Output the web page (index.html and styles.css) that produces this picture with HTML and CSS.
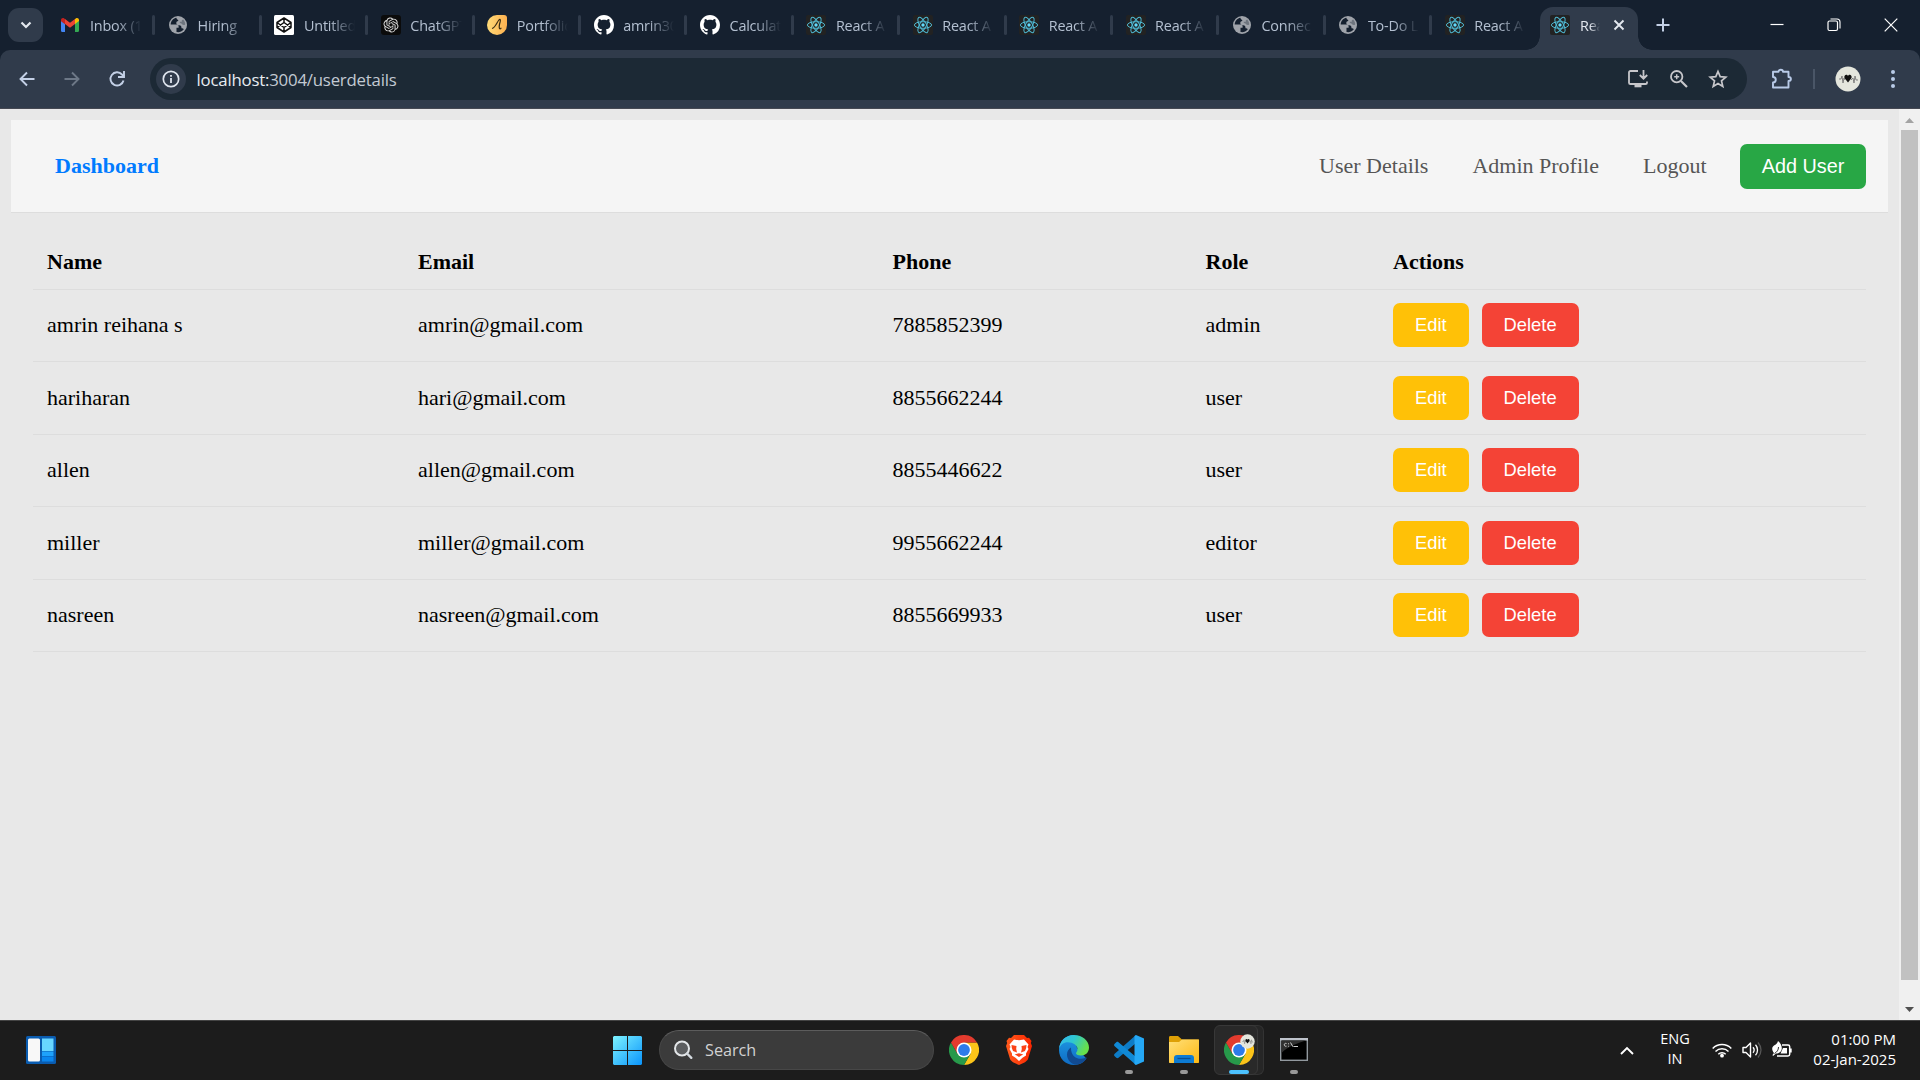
FILE: index.html
```html
<!DOCTYPE html>
<html lang="en">
<head>
<meta charset="utf-8">
<title>React App</title>
<link rel="stylesheet" href="styles.css">
</head>
<body>
<svg class="defs" aria-hidden="true">
  <defs>
    <linearGradient id="g-win" x1="0" y1="0" x2="1" y2="1"><stop offset="0" stop-color="#7df3ff"/><stop offset="1" stop-color="#0a94fb"/></linearGradient>
    <linearGradient id="g-edge" x1="0" y1="0" x2="1" y2="0.4"><stop offset="0" stop-color="#35b8f1"/><stop offset=".5" stop-color="#2fc7d0"/><stop offset="1" stop-color="#67e04c"/></linearGradient>
    <linearGradient id="g-edge2" x1="0" y1="0" x2="0" y2="1"><stop offset="0" stop-color="#1f9be6"/><stop offset="1" stop-color="#0f6bc2"/></linearGradient>
    <linearGradient id="g-folder" x1="0" y1="0" x2="1" y2="1"><stop offset="0" stop-color="#ffe07a"/><stop offset="1" stop-color="#fdb813"/></linearGradient>
    <linearGradient id="g-brave" x1="0" y1="0" x2="1" y2="0"><stop offset="0" stop-color="#ff5a1c"/><stop offset="1" stop-color="#fb2600"/></linearGradient>
    <linearGradient id="g-port" x1="0" y1="0" x2="1" y2="0"><stop offset="0" stop-color="#ffdb78"/><stop offset="1" stop-color="#fdb04f"/></linearGradient>
  </defs>
  <symbol id="react" viewBox="0 0 20 20">
    <rect width="20" height="20" rx="2" fill="#222"/>
    <g fill="none" stroke="#4fb9d3" stroke-width="1">
      <ellipse cx="10" cy="10" rx="8.6" ry="3.3"/>
      <ellipse cx="10" cy="10" rx="8.6" ry="3.3" transform="rotate(60 10 10)"/>
      <ellipse cx="10" cy="10" rx="8.6" ry="3.3" transform="rotate(120 10 10)"/>
    </g>
    <circle cx="10" cy="10" r="1.7" fill="#61dafb"/>
  </symbol>
  <symbol id="globe" viewBox="0 0 20 20">
    <circle cx="10" cy="10" r="9" fill="#9fa3aa"/>
    <path d="M8.300 2.800C5 3.500 2.800 6.300 2.700 9.500h5.600c1.500 0 2.300.9 2.300 2v1.300H8.500v4.300c2.500.5 5.500-.2 7.300-2.800-.5-.8-1.200-1-2.300-1 0-2.200-.6-3-2.200-3-1.800 0-3-.9-3-2.300 0-1.300.8-2.100 2-2.100 0-1-.4-1.500-1.200-1.500z" fill="#15202f"/>
    <path d="M17.200 9.500c-1.200.9-3.200.6-3.700-.9-1.300-.1-1.900-.8-1.900-1.800h2.200V5.300l1.400-.7c1.200 1.200 2 3 2 4.900z" fill="#15202f" opacity=".35"/>
  </symbol>
  <symbol id="github" viewBox="0 0 16 16">
    <path fill="#fff" d="M8 0C3.580 0 0 3.580 0 8c0 3.540 2.290 6.530 5.470 7.590.4.070.55-.17.55-.38 0-.19-.01-.82-.01-1.490-2.010.37-2.530-.49-2.690-.94-.09-.23-.48-.94-.82-1.130-.28-.15-.68-.52-.01-.53.63-.01 1.080.58 1.230.82.72 1.210 1.870.87 2.330.66.07-.52.28-.87.51-1.070-1.780-.2-3.640-.89-3.640-3.950 0-.87.31-1.590.82-2.150-.08-.2-.36-1.020.08-2.120 0 0 .67-.21 2.200.82.64-.18 1.320-.27 2-.27s1.360.09 2 .27c1.530-1.040 2.200-.82 2.200-.82.44 1.100.16 1.920.08 2.120.51.56.82 1.270.82 2.150 0 3.070-1.870 3.750-3.650 3.950.29.25.54.73.54 1.480 0 1.070-.01 1.930-.01 2.200 0 .21.15.46.55.38A8.010 8.010 0 0 0 16 8c0-4.420-3.580-8-8-8z"/>
  </symbol>
  <symbol id="chrome" viewBox="0 0 30 30">
    <path d="M15 7.500H28A15 15 0 0 1 15 30l6.500-11.200z" fill="#fcc419"/>
    <path d="M21.500 18.700 15 30A15 15 0 0 1 2 7.500l6.500 11.300z" fill="#27994a"/>
    <path d="M2 7.500A15 15 0 0 1 28 7.500H15L8.500 18.700z" fill="#e33b2e"/>
    <circle cx="15" cy="15" r="7.500" fill="#fff"/><circle cx="15" cy="15" r="5.900" fill="#2d7bea"/>
  </symbol>
  <symbol id="avatar" viewBox="0 0 26 26">
    <circle cx="13" cy="13" r="12.500" fill="#e4e6dd"/>
    <path d="M4 13h2l1-3 1 7 1-5 1 2M16 14l2-2 1 5 1-7 1 4h2" fill="none" stroke="#777" stroke-width=".9"/>
    <path d="M13 16.500 9.500 12c-1-3 2.500-4.500 3.500-2 1-2.500 4.500-1 3.500 2z" fill="#111"/>
  </symbol>
</svg>

<header class="tabstrip">
  <button class="tab-search"><svg width="12" height="8" viewBox="0 0 12 8"><path d="M1.500 1.500 6 6l4.500-4.500" fill="none" stroke="#e3e8ef" stroke-width="2.200"/></svg></button>
  <nav class="tabs">
    <div class="tab first"><svg class="fav" viewBox="0 0 20 20"><path d="M1 5v10.500c0 .9.500 1.500 1.300 1.500H5V8z" fill="#4285f4"/><path d="M15 8v9h2.700c.8 0 1.300-.6 1.300-1.500V5z" fill="#34a853"/><path d="M15 4v5l4-3V5c0-2-2-2.600-3.200-1.600z" fill="#fbbc04"/><path d="M5 4v5l5 3.700L15 9V4l-5 3.800z" fill="#ea4335"/><path d="M1 5v1.200l4 3V4l-.8-.6C3 2.400 1 3 1 5z" fill="#c5221f"/></svg><span class="title">Inbox (1</span></div>
    <div class="tab"><svg class="fav"><use href="#globe"/></svg><span class="title">Hiring</span></div>
    <div class="tab"><svg class="fav" viewBox="0 0 20 20"><rect width="20" height="20" rx="1.500" fill="#fff"/><path d="M10 3 17 7.500v5L10 17l-7-4.500v-5zM10 3v4.500M10 12.500V17M3 7.500l7 5 7-5M3 12.500l7-5 7 5" fill="none" stroke="#111" stroke-width="1.500" stroke-linejoin="round"/></svg><span class="title">Untitled</span></div>
    <div class="tab"><svg class="fav" viewBox="0 0 20 20"><rect width="20" height="20" rx="3" fill="#0b0b0b"/><g transform="translate(2.500 2.500) scale(.625)"><path fill="#ddd" d="M22.282 9.821a5.985 5.985 0 0 0-.516-4.910 6.046 6.046 0 0 0-6.510-2.900A6.065 6.065 0 0 0 4.981 4.180a5.985 5.985 0 0 0-3.998 2.900 6.046 6.046 0 0 0 .743 7.097 5.980 5.980 0 0 0 .510 4.911 6.051 6.051 0 0 0 6.515 2.900A5.985 5.985 0 0 0 13.260 24a6.056 6.056 0 0 0 5.772-4.206 5.990 5.990 0 0 0 3.997-2.900 6.056 6.056 0 0 0-.747-7.073zM13.260 22.430a4.476 4.476 0 0 1-2.876-1.040l.141-.081 4.779-2.758a.795.795 0 0 0 .392-.681v-6.737l2.020 1.168a.071.071 0 0 1 .038.052v5.583a4.504 4.504 0 0 1-4.494 4.494zM3.600 18.304a4.470 4.470 0 0 1-.535-3.014l.142.085 4.783 2.759a.771.771 0 0 0 .780 0l5.843-3.369v2.332a.080.080 0 0 1-.033.062L9.740 19.950a4.500 4.500 0 0 1-6.140-1.646zM2.340 7.896a4.485 4.485 0 0 1 2.366-1.973V11.600a.766.766 0 0 0 .388.676l5.815 3.355-2.020 1.168a.076.076 0 0 1-.071 0l-4.830-2.786A4.504 4.504 0 0 1 2.340 7.872zm16.597 3.855-5.833-3.387L15.119 7.200a.076.076 0 0 1 .071 0l4.830 2.791a4.494 4.494 0 0 1-.676 8.105v-5.678a.790.790 0 0 0-.407-.667zm2.010-3.023-.141-.085-4.774-2.782a.776.776 0 0 0-.785 0L9.409 9.230V6.897a.066.066 0 0 1 .028-.061l4.830-2.787a4.500 4.500 0 0 1 6.680 4.660zm-12.640 4.135-2.020-1.164a.080.080 0 0 1-.038-.057V6.075a4.500 4.500 0 0 1 7.375-3.453l-.142.080L8.704 5.460a.795.795 0 0 0-.393.681zm1.097-2.365 2.602-1.500 2.607 1.500v2.999l-2.597 1.500-2.607-1.500z"/></g></svg><span class="title">ChatGPT</span></div>
    <div class="tab"><svg class="fav" viewBox="0 0 20 20"><path d="M10 0h7a3 3 0 0 1 3 3v7A10 10 0 1 1 10 0z" fill="url(#g-port)"/><path d="M5 13.500C8 13 10 7.500 11.500 5.500c1.500-2 2.200-1 1.700 1-.7 2.500-1.400 5.500-.7 7 .5.900 1.300.2 1.800-.7" fill="none" stroke="#3a2c12" stroke-width="1.200"/></svg><span class="title">Portfolio</span></div>
    <div class="tab"><svg class="fav"><use href="#github"/></svg><span class="title">amrin30</span></div>
    <div class="tab"><svg class="fav"><use href="#github"/></svg><span class="title">Calculat</span></div>
    <div class="tab"><svg class="fav"><use href="#react"/></svg><span class="title">React A</span></div>
    <div class="tab"><svg class="fav"><use href="#react"/></svg><span class="title">React A</span></div>
    <div class="tab"><svg class="fav"><use href="#react"/></svg><span class="title">React A</span></div>
    <div class="tab"><svg class="fav"><use href="#react"/></svg><span class="title">React A</span></div>
    <div class="tab"><svg class="fav"><use href="#globe"/></svg><span class="title">Connec</span></div>
    <div class="tab"><svg class="fav"><use href="#globe"/></svg><span class="title">To-Do L</span></div>
    <div class="tab last"><svg class="fav"><use href="#react"/></svg><span class="title">React A</span></div>
    <div class="tab active"><svg class="fav"><use href="#react"/></svg><span class="title">Rea</span><svg class="close" width="12" height="12" viewBox="0 0 12 12"><path d="m1.500 1.500 9 9m0-9-9 9" stroke="#e3e8ef" stroke-width="1.900"/></svg></div>
  </nav>
  <svg class="newtab" width="14" height="14" viewBox="0 0 14 14"><path d="M7 .5v13M.5 7h13" stroke="#c3d0e6" stroke-width="2"/></svg>
  <div class="winctl">
    <svg width="14" height="14" viewBox="0 0 14 14"><path d="M.5 6.500h13" stroke="#fff" stroke-width="1.200"/></svg>
    <svg width="14" height="14" viewBox="0 0 14 14"><rect x="1" y="3" width="9.500" height="9.500" rx="1.500" fill="none" stroke="#fff" stroke-width="1.200"/><path d="M3.500 1H10a3 3 0 0 1 3 3v6.500" fill="none" stroke="#fff" stroke-width="1.100"/></svg>
    <svg width="14" height="14" viewBox="0 0 14 14"><path d="m.7.7 12.600 12.600m0-12.600L.7 13.300" stroke="#fff" stroke-width="1.200"/></svg>
  </div>
</header>

<div class="toolbar-wrap">
<div class="toolbar">
  <div class="navbtns">
    <svg width="20" height="20" viewBox="0 0 20 20"><path d="M17.500 10H4M10 3.500 3.500 10l6.500 6.500" fill="none" stroke="#c3d0e6" stroke-width="1.900"/></svg>
    <svg width="20" height="20" viewBox="0 0 20 20"><path d="M2.500 10H16M10 3.500l6.500 6.500-6.500 6.500" fill="none" stroke="#6d7887" stroke-width="1.900"/></svg>
    <svg width="20" height="20" viewBox="0 0 20 20"><path d="M16.500 11.500A6.600 6.600 0 1 1 15 5.500L17 7.500" fill="none" stroke="#c3d0e6" stroke-width="1.900"/><path d="M17 2v6h-6" fill="none" stroke="#c3d0e6" stroke-width="1.900"/></svg>
  </div>
  <div class="omnibox">
    <span class="info"><svg width="18" height="18" viewBox="0 0 18 18"><circle cx="9" cy="9" r="7.700" fill="none" stroke="#dfe5ee" stroke-width="1.700"/><path d="M9 8v5M9 5v1.700" stroke="#dfe5ee" stroke-width="1.800"/></svg></span>
    <span class="url"><b>localhost:</b>3004/userdetails</span>
    <div class="omniacts">
      <svg width="22" height="20" viewBox="0 0 22 20"><path d="M11 2H3.500C2.500 2 2 2.500 2 3.300v10.400c0 .8.500 1.300 1.500 1.300h15c1 0 1.500-.5 1.500-1.300V12.500M16.500 1v8M12.800 6l3.700 3.700L20.200 6" fill="none" stroke="#c7c7cb" stroke-width="1.800"/><path d="M7.500 15h7v3.300h-7z" fill="#c7c7cb"/></svg>
      <svg width="20" height="20" viewBox="0 0 20 20"><circle cx="7.700" cy="7.700" r="5.700" fill="none" stroke="#c7c7cb" stroke-width="1.800"/><path d="m12 12 6 6" stroke="#c7c7cb" stroke-width="2.200"/><path d="M7.700 5.200v5M5.200 7.700h5" stroke="#c7c7cb" stroke-width="1.500"/></svg>
      <svg width="20" height="20" viewBox="0 0 20 20"><path d="m10 2.500 2.200 5.200 5.600.5-4.300 3.700 1.300 5.500L10 14.500l-4.800 2.900 1.300-5.500L2.200 8.200l5.600-.5z" fill="none" stroke="#c7c7cb" stroke-width="1.700"/></svg>
    </div>
  </div>
  <svg class="puzzle" width="22" height="22" viewBox="0 0 22 22"><path d="M2 3.700h5.500C7.500 1 12 1 12 3.700h5.500V9c3.200 0 3.200 4 0 4v6.500H2v-5c3.700 0 3.700-5.500 0-5.500z" fill="none" stroke="#b9cbe8" stroke-width="1.900" stroke-linejoin="round"/></svg>
  <i class="tsep"></i>
  <svg class="avatar" width="26" height="26"><use href="#avatar"/></svg>
  <svg class="kebab" width="6" height="20" viewBox="0 0 6 20"><g fill="#b9cbe8"><circle cx="3" cy="3" r="2"/><circle cx="3" cy="10" r="2"/><circle cx="3" cy="17" r="2"/></g></svg>
</div>
</div>

<div class="viewport">
  <main class="page">
    <nav class="navbar">
      <a class="brand">Dashboard</a>
      <div class="links"><a>User Details</a><a>Admin Profile</a><a>Logout</a></div>
      <button class="add">Add User</button>
    </nav>
    <table class="users">
      <colgroup><col class="c-name"><col class="c-email"><col class="c-phone"><col class="c-role"><col></colgroup>
      <thead><tr><th>Name</th><th>Email</th><th>Phone</th><th>Role</th><th>Actions</th></tr></thead>
      <tbody>
        <tr><td>amrin reihana s</td><td>amrin@gmail.com</td><td>7885852399</td><td>admin</td><td><div class="acts"><button class="edit">Edit</button><button class="delete">Delete</button></div></td></tr>
        <tr><td>hariharan</td><td>hari@gmail.com</td><td>8855662244</td><td>user</td><td><div class="acts"><button class="edit">Edit</button><button class="delete">Delete</button></div></td></tr>
        <tr><td>allen</td><td>allen@gmail.com</td><td>8855446622</td><td>user</td><td><div class="acts"><button class="edit">Edit</button><button class="delete">Delete</button></div></td></tr>
        <tr><td>miller</td><td>miller@gmail.com</td><td>9955662244</td><td>editor</td><td><div class="acts"><button class="edit">Edit</button><button class="delete">Delete</button></div></td></tr>
        <tr><td>nasreen</td><td>nasreen@gmail.com</td><td>8855669933</td><td>user</td><td><div class="acts"><button class="edit">Edit</button><button class="delete">Delete</button></div></td></tr>
      </tbody>
    </table>
  </main>
  <div class="scrollbar">
    <svg width="9" height="5" viewBox="0 0 9 5"><path d="M0 5 4.500 0 9 5z" fill="#a3a3a3"/></svg>
    <div class="thumb"></div>
    <svg width="9" height="5" viewBox="0 0 9 5"><path d="M0 0 4.500 5 9 0z" fill="#505050"/></svg>
  </div>
</div>

<footer class="taskbar">
  <svg class="widgets" width="30" height="28" viewBox="0 0 30 28"><rect width="30" height="28" rx="1.500" fill="#0a5cb0"/><rect x="2" y="2.500" width="12" height="23" rx="1.500" fill="#f8f8f8"/><path d="M16 2.500h11.500V15H16z" fill="#68d6ff"/><path d="M16 15.500h11.500v4.500H16z" fill="#1ea2fb"/><path d="M16 20.500h11.500v5H16z" fill="#0a86ee"/></svg>
  <div class="apps">
    <span class="app"><svg width="29" height="29" viewBox="0 0 29 29"><path d="M1 0h13v14H0V1zM15 0h13l1 1v13H15zM0 15h14v14H1l-1-1zM15 15h14v13l-1 1H15z" fill="url(#g-win)"/></svg></span>
    <div class="search"><svg width="20" height="20" viewBox="0 0 20 20"><circle cx="9" cy="8.500" r="7" fill="#5b5d5f" stroke="#e3e6e8" stroke-width="2"/><path d="m14 13.500 4.300 4.300" stroke="#d5dbe0" stroke-width="2.400" stroke-linecap="round"/></svg><span>Search</span></div>
    <span class="app"><svg width="30" height="30"><use href="#chrome"/></svg></span>
    <span class="app"><svg width="26" height="30" viewBox="0 0 26 30"><path d="M8 0h10l3 3 2-.3L25.500 6l-.7 2L26 11l-4 13c-.4 1.300-2 2.500-3.500 3.500L13 30l-5.500-2.500C6 26.500 4.400 25.300 4 24L0 11l1.200-3-.7-2L3 2.700 5 3z" fill="url(#g-brave)"/><path d="m8 4.500 5 .8 5-.8 4.500 5-1 2.500 1 2-2.500 4.500 0 2-3.500 2.200L13 26l-3.500-3.300L6 20.500v-2L3.500 14l1-2-1-2.500z" fill="#fff"/><path d="m5.500 10 5 1-.3 3 .8 3.500L7 16l-1.200-3zM20.500 10l-5 1 .3 3-.8 3.500 4-1.500 1.200-3zM8.700 19.500l4.300-1.300 4.300 1.300-2 1L13 22l-2.300-1.500z" fill="#fb4317"/></svg></span>
    <span class="app"><svg width="30" height="30" viewBox="0 0 30 30"><path d="M15 0C6.500 0 0 6.500 0 15s6.500 15 15 15c5.500 0 10-2.800 12.300-6.500L18 13z" fill="url(#g-edge2)"/><path d="M.1 14C.8 5.500 7 0 15 0c8.500 0 15 6 15 12.500 0 5-3.500 8-8 8-3.500 0-5-1.300-5-2.300 0-.8 1.500-1.500 1.500-4.200C18.500 10.500 14 7.300 9 7.300 4.500 7.300 1.300 10 .1 14z" fill="url(#g-edge)"/><path d="M12 12.500c-2.500 1.500-4 4-4 7C8 25 12.500 30 18 29.600c4-.7 7.500-3.200 9.500-6.200.3-.6-.2-1-.8-.7-7 3.300-15.200-.7-14.700-10.200z" fill="#114a91"/></svg></span>
    <span class="app"><svg width="30" height="30" viewBox="0 0 30 30"><path d="M22 8 4.500 22.800c-.7.600-1.500.6-2.200 0L.7 21.300c-.8-.7-.8-1.800 0-2.500L22 0z" fill="#0e7cc6"/><path d="M22 22 4.500 7.300c-.7-.6-1.500-.6-2.200 0L.7 8.700c-.8.700-.8 1.800 0 2.500L22 30z" fill="#1089d6"/><path d="M22 0 30 3.500v23L22 30l-1.500-1V1z" fill="#25a8f5"/></svg><i></i></span>
    <span class="app"><svg width="30" height="28" viewBox="0 0 30 28"><path d="M0 1.500C0 .5.500 0 1.500 0H9l4 3.500h17V10H0z" fill="#dea006"/><path d="M0 6h10l3-2.500h16c.7 0 1 .3 1 1V26c0 .7-.3 1-1 1H1c-.7 0-1-.3-1-1z" fill="url(#g-folder)"/><path d="M5 27v-5c0-2 1-3 3-3h14c2 0 3 1 3 3v5z" fill="#0d7bd3"/><path d="M8.500 22.500h13" stroke="#094f93" stroke-width="1.300"/></svg><i></i></span>
    <span class="app current"><span class="tile"></span><svg width="30" height="30"><use href="#chrome"/></svg><svg class="badge" width="15" height="15"><use href="#avatar"/></svg><i></i></span>
    <span class="app"><svg class="cmd" width="28" height="23" viewBox="0 0 28 23"><rect x=".7" y=".7" width="26.600" height="21.600" fill="#000" stroke="#92999f" stroke-width="1.400"/><path d="M0 0h28v2.500H0z" fill="#bfc4cc"/><path d="M1.500 2.500h24C19 5 8 8 1.500 15z" fill="#303030"/><path d="M6.500 5.500c-3-1-3 3.500 0 2.700M8.500 5.300v1M8.500 7.800v.8M10.500 4.500l2.500 4.300M13.500 8.500h4.500" fill="none" stroke="#ccc"/></svg><i></i></span>
  </div>
  <div class="tray">
    <svg class="caret" width="14" height="9" viewBox="0 0 14 9"><path d="m1 8 6-6 6 6" fill="none" stroke="#fff" stroke-width="1.900"/></svg>
    <div class="lang">ENG<br>IN</div>
    <div class="status">
      <svg width="20" height="16" viewBox="0 0 20 16"><g fill="none" stroke="#fff" stroke-width="1.500"><path d="M.7 6.500a13 13 0 0 1 18.600 0M3.500 9.500a9.200 9.200 0 0 1 13 0M6.300 12.300a5.300 5.300 0 0 1 7.400 0"/></g><circle cx="10" cy="13.700" r="1.900" fill="#fff"/></svg>
      <svg width="20" height="18" viewBox="0 0 20 18"><path d="M1 6.500h3L8.500 2v14L4 11.500H1z" fill="none" stroke="#fff" stroke-width="1.400" stroke-linejoin="round"/><path d="M11 6.300c1.400 1.600 1.400 3.800 0 5.400M13.500 3.800c2.700 3 2.700 7.400 0 10.400" fill="none" stroke="#fff" stroke-width="1.300"/><path d="M16 1.500c4 4.500 4 10.500 0 15" fill="none" stroke="#555" stroke-width="1.300"/></svg>
      <svg width="20" height="18" viewBox="0 0 20 18"><path d="M10 4h6c1 0 1.700.7 1.700 1.700v7.600c0 1-.7 1.700-1.700 1.700H5" fill="none" stroke="#fff" stroke-width="1.500"/><path d="M18 7.500h1.700v4H18zM11 7h4v5.500H8.500z" fill="#fff"/><path d="M6 0c3 2.500 4.500 6 3.500 9-.8 2.300-3 3.500-5.500 3.500L1 15l-.5-1L2 12C-.5 9-.3 6 2 4.500 4 3.500 5.500 2.500 6 0z" fill="#fff"/><path d="M6.500 6c0 3-1.500 5-4 6.500" fill="none" stroke="#1c1c1c" stroke-width=".9"/></svg>
    </div>
    <div class="clock">01:00 PM<br>02-Jan-2025</div>
  </div>
</footer>
</body>
</html>
```
FILE: styles.css
```css
* { box-sizing: border-box; }
html, body { height: 100%; }
body {
  margin: 0;
  width: 1920px;
  height: 1080px;
  overflow: hidden;
  display: flex;
  flex-direction: column;
  background: #e8e8e8;
  font-family: "Open Sans", "Noto Sans", sans-serif;
}
svg { display: block; flex: none; }
button { border: 0; margin: 0; padding: 0; }
.defs { position: absolute; width: 0; height: 0; }

/* Tab strip */
.tabstrip { height: 50px; flex: none; display: flex; background: #15202f; color: #b4c0d1; }
.tab-search {
  width: 35px; height: 34px; margin: 8px 5px 0 8px; border-radius: 11px;
  background: #303b4b; display: flex; align-items: center; justify-content: center;
}
.tabs { display: flex; }
.tab { width: 106.4px; display: flex; align-items: center; gap: 9.500px; padding: 0 12px 0 13.700px; position: relative; }
.tab.first { padding-left: 12px; gap: 10px; }
.tab:not(.active)::after {
  content: ""; width: 3px; height: 20px; border-radius: 2px; background: #303b4b;
  position: absolute; right: -1px; top: 15px;
}
.tab.last::after { display: none; }
.fav { width: 20px; height: 20px; }
.title {
  flex: 1; overflow: hidden; white-space: nowrap; font-size: 14.4px; letter-spacing: -.2px; line-height: 24px; padding-top: 2px;
  -webkit-mask-image: linear-gradient(90deg, #000 50%, transparent 100%);
  mask-image: linear-gradient(90deg, #000 50%, transparent 100%);
}
.active {
  width: 98px; height: 43px; margin: 7px 0 0 2.500px; padding: 0 13px 7px 10px; gap: 10px;
  background: #303b4b; border-radius: 13px 13px 0 0; color: #e3e8ef;
}
.active::before, .active::after {
  content: ""; position: absolute; bottom: 0; width: 14px; height: 14px;
}
.active::before { left: -14px; background: radial-gradient(circle at 0 0, transparent 13.500px, #303b4b 14px); }
.active::after { right: -14px; background: radial-gradient(circle at 14px 0, transparent 13.500px, #303b4b 14px); }
.active .title { flex: 0 0 20px; }
.active .close { margin-left: 3px; }
.newtab { margin: 18px 0 0 18.500px; }
.winctl { margin: 18px 22px 0 auto; display: flex; gap: 43px; }

/* Address bar row */
.toolbar-wrap { flex: none; background: #15202f; }
.toolbar {
  height: 59px; display: flex; align-items: center; padding-right: 24.500px;
  background: #303b4b; border-bottom: 1px solid #454852; border-radius: 10px 10px 0 0;
}
.navbtns { display: flex; gap: 25px; padding: 0 23px 0 17px; }
.omnibox {
  width: 1597px; height: 42px; border-radius: 21px; background: #1c2935;
  display: flex; align-items: center; padding: 0 19px 0 6px;
}
.info { width: 30px; height: 30px; border-radius: 50%; background: #303b4b; display: flex; align-items: center; justify-content: center; }
.url { margin-left: 10.500px; font-size: 16.8px; letter-spacing: -.2px; color: #c3cad3; }
.url b { font-weight: 400; color: #e8ecf1; }
.omniacts { margin-left: auto; display: flex; align-items: center; gap: 19.500px; }
.puzzle { margin-left: 23.500px; }
.tsep { width: 2px; height: 20px; background: #4a5667; margin-left: 20.500px; }
.avatar { margin-left: 19.500px; }
.kebab { margin-left: auto; }

/* Web page */
.viewport { height: 911px; flex: none; display: flex; }
.page { flex: 1; padding: 11px; font-family: "Liberation Serif", "Times New Roman", serif; font-size: 22px; color: #000; }
.navbar {
  height: 93px; display: flex; align-items: center; padding: 0 22px;
  background: #f5f5f5; border-bottom: 1px solid #ddd; color: #555;
}
.brand { margin-left: 22px; font-weight: 700; color: #007bff; }
.links { display: flex; gap: 44px; margin: 0 33.500px 0 auto; }
.navbar button, .acts button { font-family: "Liberation Sans", Arial, sans-serif; color: #fff; border-radius: 7px; }
.add { width: 126px; height: 45px; background: #28a745; font-size: 19.800px; }
.users { width: 1833px; margin: 22px 0 0 22px; table-layout: fixed; border-collapse: separate; border-spacing: 0; }
.c-name { width: 371px; }
.c-email { width: 474.500px; }
.c-phone { width: 313px; }
.c-role { width: 187.500px; }
th, td { text-align: left; padding: 0 14px; border-bottom: 1px solid #ddd; }
th { height: 54.500px; }
td { height: 72.500px; }
tbody tr:first-child td, tbody tr:nth-child(3) td, tbody tr:nth-child(5) td { height: 72px; }
tbody tr:nth-child(2) td, tbody tr:nth-child(4) td { height: 73px; }
.acts { display: flex; gap: 13px; }
.acts button { height: 44px; font-size: 18.330px; padding: 0 22px; }
.edit { background: #ffc107; }
.delete { background: #f44336; }
.scrollbar {
  width: 21px; background: #f0f0f0; display: flex; flex-direction: column; align-items: center;
  padding: 9px 0 8px;
}
.thumb { width: 17px; height: 850px; margin: 7px 0 auto; background: #c1c1c1; }

/* Taskbar */
.taskbar {
  height: 60px; flex: none; display: flex; align-items: center;
  background: #1c1c1c; border-top: 1px solid #444; color: #fff;
}
.widgets { margin: -1px 0 0 26px; }
.apps { display: flex; align-items: center; margin-left: 544px; }
.app { width: 55px; height: 59px; display: flex; align-items: center; justify-content: center; position: relative; }
.app > svg { margin-top: -1px; }
.app i { position: absolute; left: 23.500px; bottom: 6px; width: 8px; height: 4px; border-radius: 2px; background: #999; }
.search {
  width: 275px; height: 40px; margin: -1px 2.500px 0 4px; border-radius: 20px; background: #3b3b3b;
  border: 1px solid #474747; border-top-color: #5c5c5c; display: flex; align-items: center; padding-left: 13px;
  font-size: 16.200px; color: #d2d2d2; gap: 12px;
}
.tile {
  position: absolute; left: 2.500px; top: 4px; width: 44px; height: 50px; border-radius: 6px;
  background: #292929; border: 1px solid #383838; box-shadow: 6px 0 0 -1px #262626, 6px 0 0 0 #333;
}
.current svg { position: relative; }
.current .badge { position: absolute; left: 28px; top: 14px; }
.app.current i { left: 17.500px; width: 20px; background: #4cc2ff; }
.app .cmd { margin: -2px 1px 0 0; }
.tray { display: flex; align-items: center; margin: -3px 0 0 auto; padding-right: 24px; font-size: 15px; line-height: 20px; }
.caret { margin-top: 2px; }
.lang { width: 30px; margin: 0 22px 0 26px; text-align: center; font-size: 14.500px; }
.status { display: flex; align-items: center; gap: 10px; margin-top: 1px; }
.clock { width: 104px; text-align: right; }
```
